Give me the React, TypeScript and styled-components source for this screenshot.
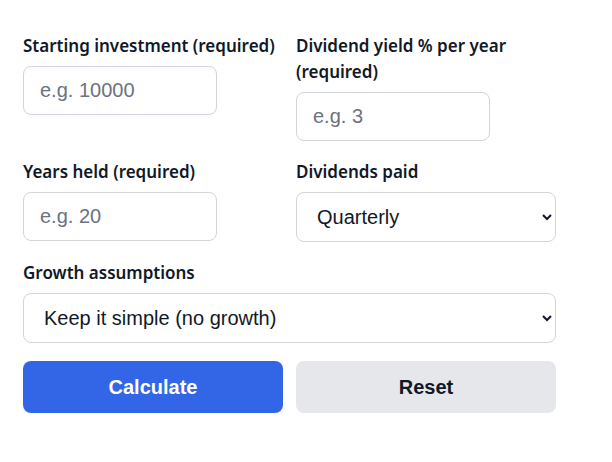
import React from "react";
import styled, { createGlobalStyle } from "styled-components";

const GlobalStyle = createGlobalStyle`
  html, body {
    margin: 0;
    padding: 0;
    background: #ffffff;
  }
  * {
    box-sizing: border-box;
  }
`;

const App = () => {
  return (
    <>
      <GlobalStyle />
      <Page>
        <Form onSubmit={(e) => e.preventDefault()}>
          <Field>
            <Label htmlFor="start">Starting investment (required)</Label>
            <Input id="start" placeholder="e.g. 10000" />
          </Field>
          <Field>
            <Label htmlFor="yield">Dividend yield % per year (required)</Label>
            <Input id="yield" placeholder="e.g. 3" />
          </Field>
          <Field>
            <Label htmlFor="years">Years held (required)</Label>
            <Input id="years" placeholder="e.g. 20" />
          </Field>
          <Field>
            <Label htmlFor="freq">Dividends paid</Label>
            <Select id="freq" defaultValue="quarterly">
              <option value="monthly">Monthly</option>
              <option value="quarterly">Quarterly</option>
              <option value="annually">Annually</option>
            </Select>
          </Field>
          <Field $wide>
            <Label htmlFor="growth">Growth assumptions</Label>
            <Select id="growth" defaultValue="simple">
              <option value="simple">Keep it simple (no growth)</option>
              <option value="custom">Add growth assumptions</option>
            </Select>
          </Field>
          <Button type="submit" $primary>
            Calculate
          </Button>
          <Button type="reset">Reset</Button>
        </Form>
      </Page>
    </>
  );
};

export default App;

const Page = styled.div`
  padding: 33px 23px;
`;

const Form = styled.form`
  width: 533px;
  display: grid;
  grid-template-columns: 1fr 1fr;
  column-gap: 13px;
  row-gap: 18px;
  align-items: start;
`;

const Field = styled.div<{ $wide?: boolean }>`
  display: flex;
  flex-direction: column;
  align-items: flex-start;
  grid-column: ${(p) => (p.$wide ? "1 / -1" : "auto")};
`;

const Label = styled.label`
  display: block;
  font-family: "Noto Sans", "Open Sans", sans-serif;
  font-size: 17px;
  font-weight: 600;
  line-height: 26px;
  color: #111827;
  margin-bottom: 7px;
`;

const Input = styled.input`
  width: 194px;
  height: 49px;
  padding: 0 16px;
  border: 1px solid #d1d5db;
  border-radius: 8px;
  font-family: "Liberation Sans", Arial, sans-serif;
  font-size: 20px;
  color: #111827;
  background: #ffffff;
  outline: none;

  &::placeholder {
    color: #6b7280;
  }
`;

const Select = styled.select`
  width: 100%;
  height: 50px;
  padding: 0 12px 0 16px;
  border: 1px solid #d1d5db;
  border-radius: 8px;
  font-family: "Liberation Sans", Arial, sans-serif;
  font-size: 20px;
  color: #111827;
  background: #ffffff;
  outline: none;
`;

const Button = styled.button<{ $primary?: boolean }>`
  height: 52px;
  border: none;
  border-radius: 8px;
  font-family: "Liberation Sans", Arial, sans-serif;
  font-size: 20px;
  font-weight: 700;
  cursor: pointer;
  background: ${(p) => (p.$primary ? "#3366e6" : "#e5e7eb")};
  color: ${(p) => (p.$primary ? "#ffffff" : "#111827")};
`;
